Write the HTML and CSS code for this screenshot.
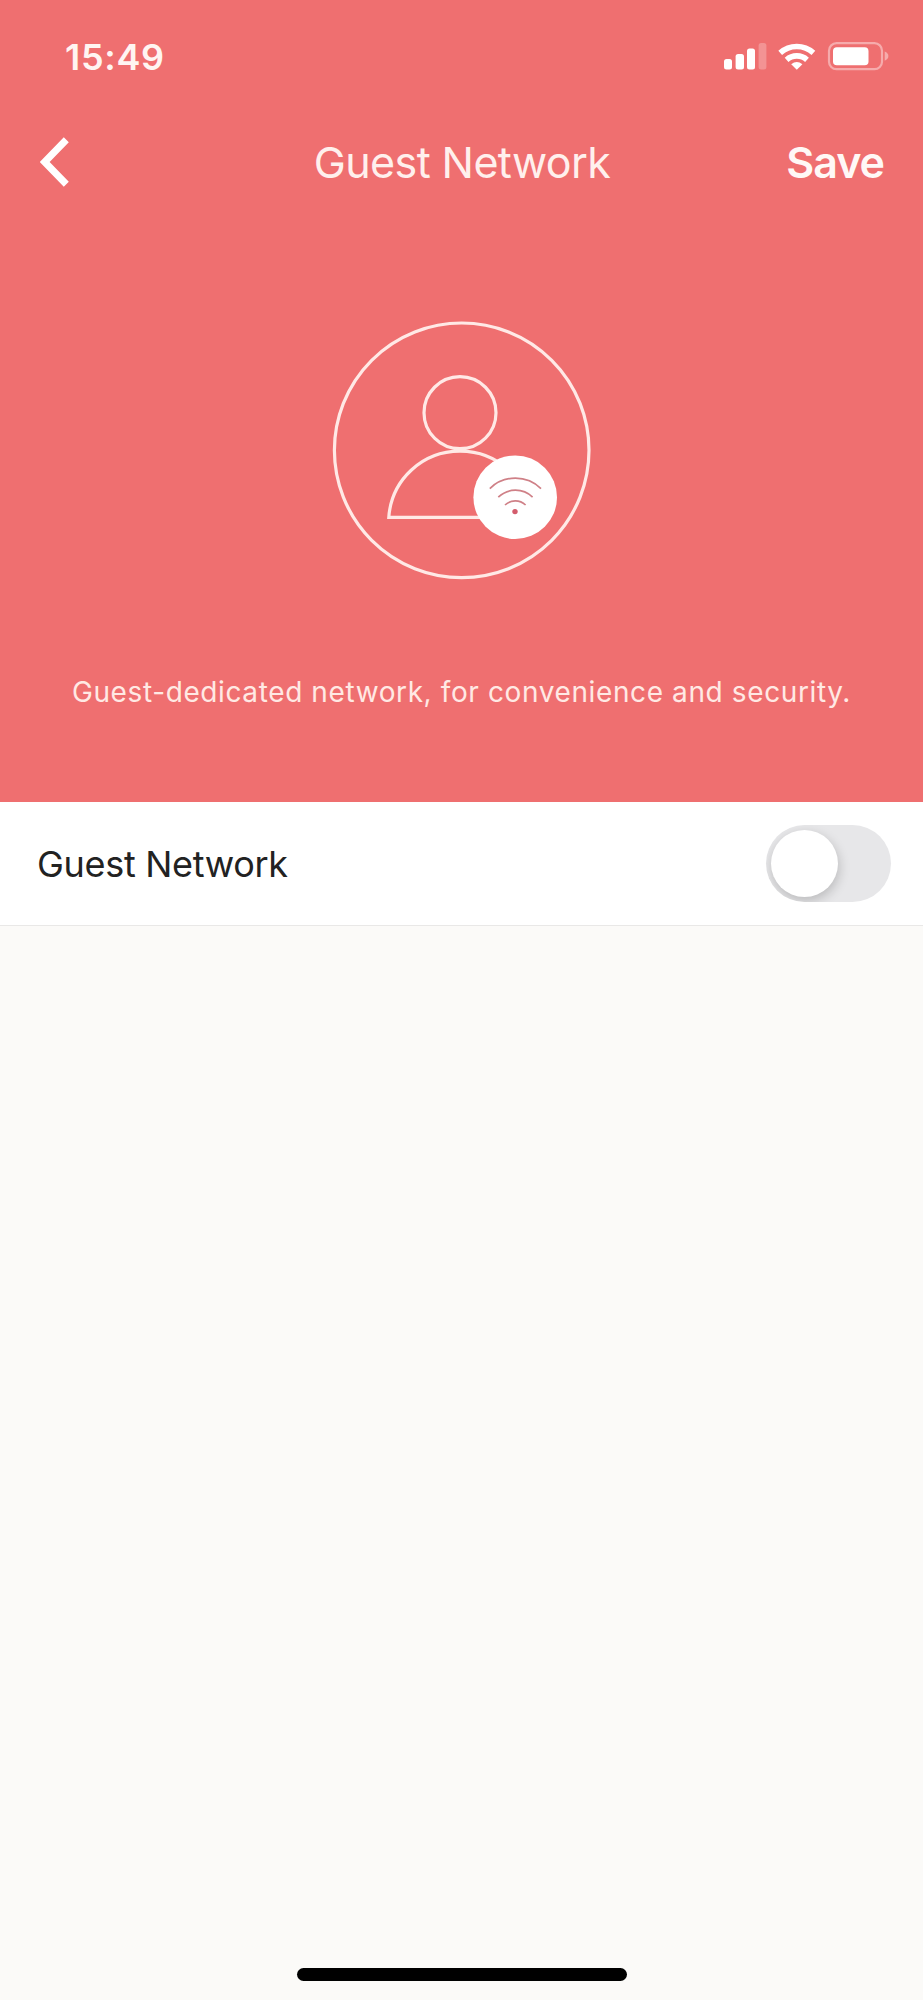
FILE: index.html
```html
<!DOCTYPE html>
<html lang="en">
<head>
<meta charset="utf-8">
<title>Guest Network</title>
<link rel="stylesheet" href="styles.css">
</head>
<body>
<div class="screen">
  <header class="hero">
    <div class="status">
      <span class="time">15:49</span>
      <svg class="indicators" width="168" height="32" viewBox="0 0 168 32" fill="#fff">
        <rect x="1" y="18" width="8" height="10.5" rx="2.5"/>
        <rect x="12.6" y="13" width="8.4" height="15.5" rx="2.5"/>
        <rect x="24" y="7.5" width="8" height="21" rx="2.5"/>
        <rect x="35.6" y="2" width="7.8" height="26.5" rx="2.5" opacity=".25"/>
        <g fill="none" stroke="#fff" stroke-width="5.6">
          <path d="M57.2 11.8A25 25 0 0 1 90.4 11.8"/>
          <path d="M63.6 18.8A15.2 15.2 0 0 1 84 18.8"/>
        </g>
        <path d="M68.2 23.2Q73.8 18.7 79.4 23.2L73.8 28.8Z"/>
        <rect x="106" y="2.2" width="53" height="26" rx="7.5" fill="none" stroke="#fff" stroke-width="2.2" opacity=".42"/>
        <rect x="110" y="6.2" width="35.5" height="18" rx="3.8"/>
        <path d="M161.7 10.5Q165.4 12 165.4 15T161.7 19.8Z" opacity=".42"/>
      </svg>
    </div>
    <nav class="nav">
      <svg class="back" width="30" height="50" viewBox="0 0 30 50" fill="none" stroke="#fff" stroke-width="7">
        <path d="M26.3 2.8L4.7 25L26.3 47.2"/>
      </svg>
      <h1 class="title">Guest Network</h1>
      <span class="save">Save</span>
    </nav>
    <svg class="art" width="280" height="280" viewBox="0 0 280 280" fill="none" stroke="#ffe9e6" stroke-width="3.2">
      <circle cx="141.7" cy="140.3" r="127.3"/>
      <circle cx="140" cy="102.7" r="36"/>
      <path d="M68.8 207.3C71.5 170 102 141.2 140 141.2S208.5 170 211.2 207.3Z"/>
      <circle cx="195.2" cy="187.2" r="41.8" fill="#fff" stroke="none"/>
      <g stroke="#cf8087" stroke-width="1.7">
        <path d="M169.8 178.6A36.5 36.5 0 0 1 221 178.6"/>
        <path d="M178.3 187.2A24.5 24.5 0 0 1 212.6 187.2"/>
        <path d="M185 195A15 15 0 0 1 205.6 195"/>
      </g>
      <circle cx="195" cy="201.6" r="2.7" fill="#d35c6c" stroke="none"/>
    </svg>
    <p class="desc">Guest-dedicated network, for convenience and security.</p>
  </header>
  <div class="row">
    <span class="label">Guest Network</span>
    <span class="toggle"><span class="knob"></span></span>
  </div>
  <div class="home"></div>
</div>
</body>
</html>
```
FILE: styles.css
```css
* { box-sizing: border-box; }
body { margin: 0; font-family: Inter, "Liberation Sans", sans-serif; }
.screen { width: 923px; height: 2000px; display: flex; flex-direction: column; background: #fbfaf8; }
.hero { height: 802px; background: #ef6f70; color: #fff; display: flex; flex-direction: column; align-items: center; }
.status { width: 100%; height: 114px; padding: 0 32px 0 65px; display: flex; align-items: center; justify-content: space-between; }
.time { font-size: 36px; font-weight: 600; letter-spacing: 0.7px; color: #fff5f2; }
.indicators { display: block; }
.nav { width: 100%; height: 96px; padding: 0 39px 0 40px; display: grid; grid-template-columns: 150px 1fr 150px; align-items: center; }
.back { display: block; }
.title { margin: 0; font-size: 43px; font-weight: 400; letter-spacing: -0.6px; text-align: center; white-space: nowrap; color: #fff0ed; }
.save { font-size: 43px; font-weight: 600; letter-spacing: -1px; text-align: right; color: #fff8f6; }
.art { display: block; margin: 100px 3px 0 0; }
.desc { margin: 82px 0 0; font-size: 28px; line-height: 40px; letter-spacing: 0.61px; white-space: nowrap; color: #ffe9e4; }
.row { height: 124px; padding: 0 32px 0 37px; display: flex; align-items: center; justify-content: space-between; background: #fff; border-bottom: 1px solid #e9e8e7; }
.label { font-size: 36px; letter-spacing: -0.3px; color: #222; }
.toggle { width: 125px; height: 77px; padding: 5px; border-radius: 39px; background: #e7e7e9; overflow: hidden; }
.knob { display: block; width: 67px; height: 67px; border-radius: 50%; background: #fff; box-shadow: 1px 4px 12px rgba(0, 0, 0, .2); }
.home { width: 330px; height: 13px; margin: auto auto 19px; border-radius: 7px; background: #000; }
```
